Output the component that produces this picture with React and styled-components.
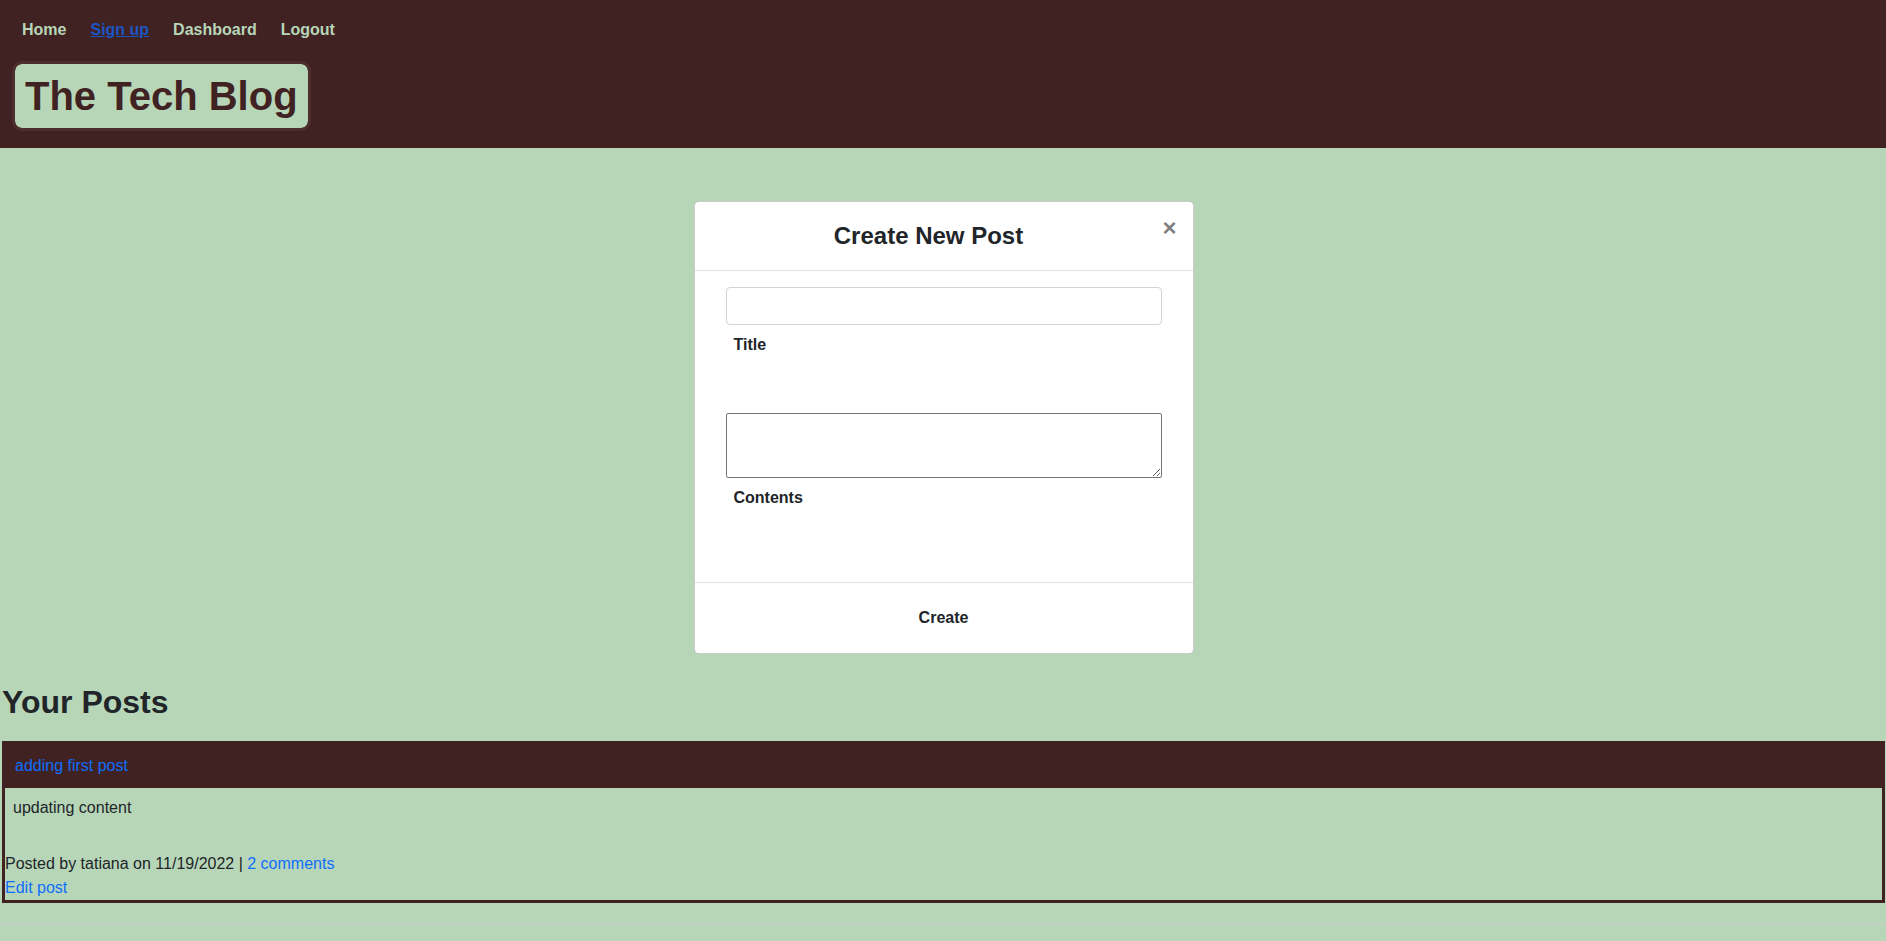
import React from "react";
import styled, { createGlobalStyle } from "styled-components";

const GlobalStyles = createGlobalStyle`
  * {
    box-sizing: border-box;
  }
  body {
    margin: 0;
    padding: 0;
    font-family: "Liberation Sans", Arial, sans-serif;
    font-size: 16px;
    line-height: 1.5;
    color: #212529;
    background-color: #b7d6b8;
  }
  a {
    color: #0d6efd;
    text-decoration: none;
  }
`;

const Header = styled.header`
  background-color: #412222;
  height: 148px;
  padding: 21px 0 0 12px;
`;

const Nav = styled.nav`
  display: flex;
  gap: 24px;
  padding-left: 10px;
  line-height: 18px;
`;

const NavLink = styled.a`
  font-weight: 700;
  font-size: 16px;
  color: ${(p) => (p.$active ? "#1b55c2" : "#b7d6b8")};
  text-decoration: ${(p) => (p.$active ? "underline" : "none")};
`;

const Logo = styled.h1`
  display: inline-block;
  margin: 22px 0 0;
  padding: 8px 10px;
  font-size: 40px;
  line-height: 48px;
  font-weight: 700;
  color: #412222;
  background-color: #b7d6b8;
  border: 3px solid #4d2d2d;
  border-radius: 10px;
  background-clip: padding-box;
`;

const Main = styled.main`
  padding: 0 1px 0 2px;
`;

const Modal = styled.div`
  width: 500px;
  margin: 53px auto 29px;
  background: #fff;
  border: 1px solid rgba(0, 0, 0, 0.2);
  border-radius: 5px;
`;

const ModalHeader = styled.div`
  display: flex;
  align-items: flex-start;
  padding: 16px;
  border-bottom: 1px solid #dee2e6;
`;

const ModalTitle = styled.h5`
  flex: 1;
  margin: 0;
  text-align: center;
  font-size: 24px;
  font-weight: 700;
  line-height: 36px;
`;

const Close = styled.button`
  margin: -16px -16px -16px auto;
  padding: 14px 16px 22px;
  background: transparent;
  border: 0;
  font-family: "Liberation Sans", Arial, sans-serif;
  font-size: 24px;
  font-weight: 700;
  line-height: 1;
  color: #000;
  opacity: 0.5;
  cursor: pointer;
`;

const ModalBody = styled.div`
  padding: 16px;
`;

const Form = styled.form`
  padding: 0 15px;
`;

const Group = styled.div`
  margin-bottom: 48px;
`;

const Input = styled.input`
  display: block;
  width: 100%;
  height: 38px;
  padding: 6px 12px;
  font: inherit;
  border: 1px solid #ced4da;
  border-radius: 4px;
  background: #fff;
`;

const TextArea = styled.textarea`
  display: block;
  width: 100%;
  height: 65px;
  padding: 2px;
  border: 1px solid #767676;
  border-radius: 2px;
  background: #fff;
`;

const Label = styled.label`
  display: block;
  padding: 8px;
  font-weight: 700;
  font-size: 16px;
  line-height: 24px;
`;

const ModalFooter = styled.div`
  display: flex;
  justify-content: center;
  padding: 16px;
  border-top: 1px solid #dee2e6;
`;

const CreateButton = styled.button`
  height: 38px;
  padding: 6px 12px;
  background: transparent;
  border: 0;
  font-family: "Liberation Sans", Arial, sans-serif;
  font-size: 16px;
  font-weight: 700;
  color: #212529;
  cursor: pointer;
`;

const SectionTitle = styled.h2`
  margin: 0 0 20px;
  font-size: 32px;
  line-height: 38px;
  font-weight: 700;
`;

const PostCard = styled.article`
  border: 3px solid #412222;
`;

const PostHeader = styled.div`
  background-color: #412222;
  padding: 10px;
`;

const PostContent = styled.p`
  margin: 0 0 24px;
  padding: 8px;
`;

const PostMeta = styled.div``;

const Footer = styled.footer`
  margin-top: 20px;
  height: 19px;
  border-top: 1px solid #c9cdc9;
`;

const App = () => {
  return (
    <>
      <GlobalStyles />
      <Header>
        <Nav>
          <NavLink href="#">Home</NavLink>
          <NavLink href="#" $active>
            Sign up
          </NavLink>
          <NavLink href="#">Dashboard</NavLink>
          <NavLink href="#">Logout</NavLink>
        </Nav>
        <Logo>The Tech Blog</Logo>
      </Header>
      <Main>
        <Modal>
          <ModalHeader>
            <ModalTitle>Create New Post</ModalTitle>
            <Close type="button" aria-label="Close">
              ×
            </Close>
          </ModalHeader>
          <ModalBody>
            <Form>
              <Group>
                <Input type="text" id="post-title" />
                <Label htmlFor="post-title">Title</Label>
              </Group>
              <Group>
                <TextArea id="post-contents" />
                <Label htmlFor="post-contents">Contents</Label>
              </Group>
            </Form>
          </ModalBody>
          <ModalFooter>
            <CreateButton type="button">Create</CreateButton>
          </ModalFooter>
        </Modal>
        <SectionTitle>Your Posts</SectionTitle>
        <PostCard>
          <PostHeader>
            <a href="#">adding first post</a>
          </PostHeader>
          <PostContent>updating content</PostContent>
          <PostMeta>
            Posted by tatiana on 11/19/2022 | <a href="#">2 comments</a>
          </PostMeta>
          <PostMeta>
            <a href="#">Edit post</a>
          </PostMeta>
        </PostCard>
      </Main>
      <Footer />
    </>
  );
};

export default App;
